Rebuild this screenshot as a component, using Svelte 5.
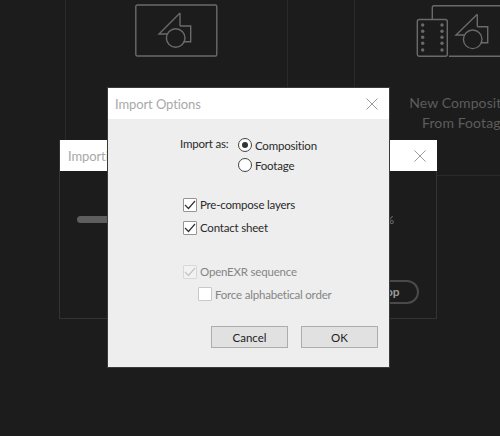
<script>
  const rows = [
    { label: 'Pre-compose layers', disabled: false, checked: true },
    { label: 'Contact sheet', disabled: false, checked: true }
  ];
  const dotYs = [20, 26.3, 32.3, 38.3, 45];
</script>

<div class="desk">
  <div class="hub">
    <div class="line v1"></div>
    <div class="line v2"></div>
    <div class="line v3"></div>
    <div class="line h1"></div>
    <svg class="art a1" width="84" height="54" viewBox="0 0 84 54" fill="none" stroke="#6a6a6a" stroke-width="1.4">
      <rect x="0.800" y="1" width="81" height="51" rx="1.500" />
      <path d="M45 9 L24 30 H32.500 M45 9 V22 M45 22 H55.700 V37.700 H48.500" />
      <circle cx="40.700" cy="34" r="9.300" />
    </svg>
    <svg class="art a2" width="84" height="54" viewBox="0 0 84 54" fill="none" stroke="#6a6a6a" stroke-width="1.4">
      <path d="M16.300 14 V2.500 Q16.300 .700 18 .700 H84 M33 51.300 H84" />
      <rect x="1.300" y="14.500" width="30" height="36.800" rx="2" />
      <g fill="#6a6a6a" stroke="none">
        {#each dotYs as y}
          <circle cx="6.700" cy={y} r="1.700" />
          <circle cx="26" cy={y} r="1.700" />
        {/each}
      </g>
      <path d="M61.300 9.300 L40 30 H48.500 M61.300 9.300 V21.700 M61.300 21.700 H71.700 V37.700 H64.500" />
      <circle cx="56.700" cy="34.300" r="9.300" />
    </svg>
    <div class="tile-label">New Composition<br />From Footage</div>
  </div>

  <div class="window back">
    <div class="titlebar back-title">
      <span class="title">Importing</span>
      <svg class="x" width="12" height="12" viewBox="0 0 12 12"><path d="M.5.500 11.500 11.500M11.500.500.500 11.500" stroke="#9c9c9c" fill="none" /></svg>
    </div>
    <div class="bar"></div>
    <div class="pct">%</div>
    <div class="stop">Stop</div>
  </div>

  <div class="window front">
    <div class="titlebar">
      <span class="title">Import Options</span>
      <svg class="x" width="12" height="12" viewBox="0 0 12 12"><path d="M.5.500 11.500 11.500M11.500.500.500 11.500" stroke="#9c9c9c" fill="none" /></svg>
    </div>
    <div class="body">
      <div class="radios">
        <span class="as">Import as:</span>
        <div class="radio-list">
          <div class="row"><span class="radio on"></span>Composition</div>
          <div class="row"><span class="radio"></span>Footage</div>
        </div>
      </div>
      <div class="checks">
        {#each rows as r}
          <div class="row">
            <span class="box">
              <svg width="12" height="10" viewBox="0 0 12 10"><path d="M1 5 4.500 8.500 11 1" fill="none" stroke="#333" stroke-width="1.200" /></svg>
            </span>{r.label}
          </div>
        {/each}
      </div>
      <div class="exr">
        <div class="row dim">
          <span class="box off">
            <svg width="12" height="10" viewBox="0 0 12 10"><path d="M1 5 4.500 8.500 11 1" fill="none" stroke="#c4c4c4" stroke-width="1.200" /></svg>
          </span>OpenEXR sequence
        </div>
        <div class="row dim sub"><span class="box blank"></span>Force alphabetical order</div>
      </div>
      <div class="actions">
        <button>Cancel</button>
        <button>OK</button>
      </div>
    </div>
  </div>
</div>

<style>
  :global(body) { margin: 0; background: #1c1c1c; }
  .desk {
    position: relative;
    width: 500px;
    height: 436px;
    overflow: hidden;
    background: #1c1c1c;
    font-family: "Lato", "Open Sans", sans-serif;
    font-size: 11.500px;
    letter-spacing: -0.2px;
    color: #2a2a2a;
  }
  .hub { position: absolute; inset: 0; }
  .line { position: absolute; background: #2a2a2a; }
  .v1 { left: 65px; top: 0; width: 1px; height: 140px; }
  .v2 { left: 287px; top: 0; width: 1px; height: 88px; }
  .v3 { left: 354px; top: 0; width: 1px; height: 88px; }
  .h1 { left: 437px; top: 175px; width: 63px; height: 1px; }
  .art { position: absolute; }
  .a1 { left: 135px; top: 4px; }
  .a2 { left: 416px; top: 5px; }
  .tile-label {
    position: absolute;
    left: 405px;
    top: 93px;
    width: 120px;
    font-size: 14px;
    line-height: 20px;
    letter-spacing: 0.1px;
    color: #5d5d5d;
    text-align: center;
    white-space: nowrap;
  }
  .window { position: absolute; display: flex; flex-direction: column; }
  .back {
    left: 59px;
    top: 140px;
    width: 378px;
    height: 179px;
    box-sizing: border-box;
    background: #1c1c1c;
    border: 1px solid #333;
    border-top: none;
  }
  .front {
    left: 108px;
    top: 88px;
    width: 281px;
    height: 279px;
    background: #eee;
    box-shadow: 0 0 0 1px #3a3a3a;
  }
  .titlebar {
    flex: 0 0 31px;
    height: 31px;
    background: #fff;
    display: flex;
    align-items: center;
    justify-content: space-between;
    padding: 0 11px 0 7px;
  }
  .back-title { margin: 0 -1px 0 0; padding-left: 8px; }
  .title { font-size: 13px; color: #a9a9a9; letter-spacing: -0.1px; }
  .bar {
    position: absolute;
    left: 17px;
    top: 76px;
    width: 60px;
    height: 7px;
    border-radius: 4px;
    background: #5e5e5e;
  }
  .pct { position: absolute; right: 42px; top: 72px; color: #777; font-size: 12px; }
  .stop {
    position: absolute;
    left: 296px;
    top: 140px;
    width: 63px;
    height: 24px;
    box-sizing: border-box;
    border: 2px solid #4a4a4a;
    border-radius: 12px;
    color: #9a9a9a;
    font-weight: 700;
    font-size: 12px;
    line-height: 20px;
    text-align: center;
  }
  .body { flex: 1; position: relative; display: flex; flex-direction: column; }
  .row { display: flex; align-items: center; height: 20px; white-space: nowrap; }
  .radios { display: flex; margin: 16px 0 0 72px; }
  .as { line-height: 20px; width: 58px; margin-top: -1px; }
  .radio-list { display: flex; flex-direction: column; gap: 0; }
  .radio {
    width: 12px;
    height: 12px;
    border: 1px solid #444;
    border-radius: 50%;
    background: #fff;
    margin-right: 3px;
    position: relative;
  }
  .radio.on::after {
    content: "";
    position: absolute;
    left: 3px;
    top: 3px;
    width: 6px;
    height: 6px;
    border-radius: 50%;
    background: #333;
  }
  .checks { margin: 19px 0 0 75px; display: flex; flex-direction: column; gap: 3px; }
  .box {
    width: 12px;
    height: 12px;
    border: 1px solid #959595;
    border-radius: 1px;
    background: #fff;
    margin: 2px 3px 0 0;
    display: flex;
    align-items: center;
    justify-content: center;
  }
  .exr { margin-top: 24px; margin-left: 75px; display: flex; flex-direction: column; gap: 3px; }
  .dim { color: #858585; }
  .box.off { border-color: #d8d8d8; background: #f2f2f2; }
  .box.blank { border-color: #c8c8c8; margin-top: 0; }
  .sub { margin-left: 15px; }
  .actions { margin: auto 11px 0 0; padding-bottom: 19px; display: flex; justify-content: flex-end; gap: 13px; }
  button {
    width: 77px;
    height: 22px;
    box-sizing: border-box;
    background: #e1e1e1;
    border: 1px solid #adadad;
    font: inherit;
    color: #222;
    padding: 0;
  }
</style>
